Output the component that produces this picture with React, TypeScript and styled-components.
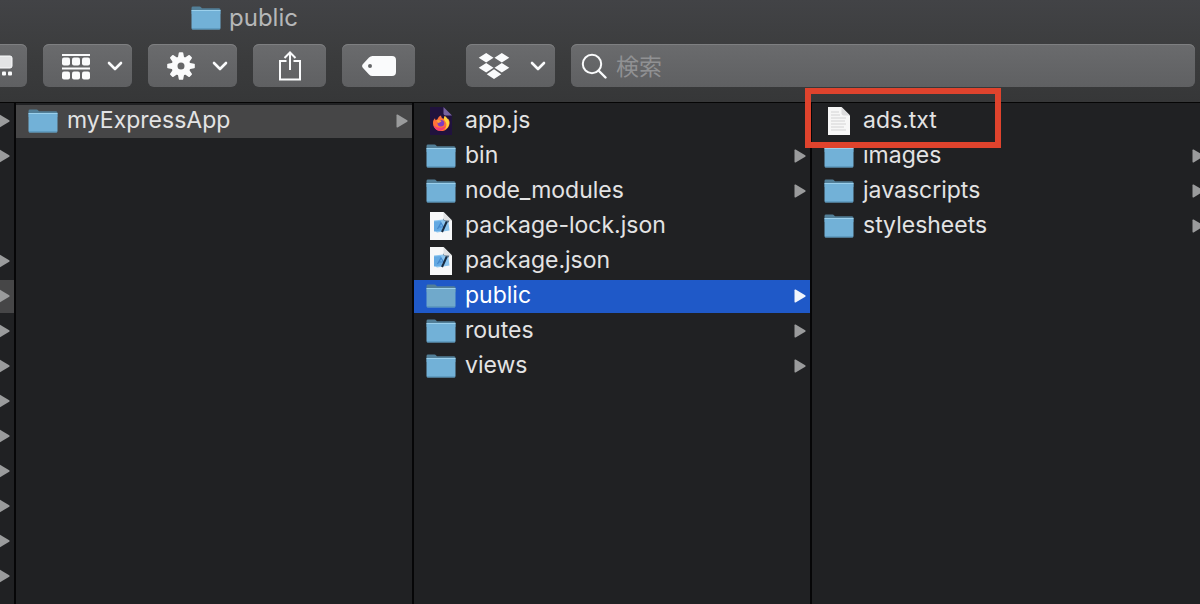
import React from "react";
import styled, { createGlobalStyle, css } from "styled-components";

const GlobalStyle = createGlobalStyle`
  * { box-sizing: border-box; }
  body {
    margin: 0;
    background: #202123;
    font-family: Inter, "Noto Sans CJK JP", sans-serif;
    -webkit-font-smoothing: antialiased;
  }
  svg { display: block; flex: none; }
`;

const Window = styled.div`
  display: flex;
  flex-direction: column;
  min-height: 100vh;
  overflow: hidden;
  background: #202123;
`;

const Header = styled.header`
  background: linear-gradient(#424346, #3b3c3d 55%, #363738);
  border-bottom: 1px solid #050505;
  padding-bottom: 15px;
`;

const TitleBar = styled.div`
  display: flex;
  align-items: center;
  gap: 8px;
  height: 36px;
  margin-bottom: 8px;
  padding-left: 191px;
`;

const Title = styled.h1`
  margin: 0;
  font-size: 24px;
  line-height: 36px;
  font-weight: 400;
  color: #b6b7b8;
`;

const Toolbar = styled.div`
  display: flex;
  gap: 16px;
  padding-right: 5px;
`;

const surface = css`
  height: 43px;
  border: 0;
  border-radius: 6px;
  background: linear-gradient(#6a6b6d, #5f6062);
  box-shadow: inset 0 1px 0 #7e7f81;
  color: #fafbfc;
`;

const ToolButton = styled.button`
  ${surface}
  display: flex;
  flex: none;
  align-items: center;
  justify-content: center;
  width: 73px;
  padding: 0;
`;

const MenuButton = styled(ToolButton)<{ $inset: number }>`
  justify-content: space-between;
  width: 89px;
  padding: 0 9px 0 ${(p) => p.$inset}px;
`;

const EdgeButton = styled(ToolButton)`
  justify-content: flex-start;
  width: 27px;
  border-radius: 0 6px 6px 0;
`;

const Spacer = styled.div`
  flex: none;
  width: 19px;
`;

const SearchBox = styled.label`
  ${surface}
  display: flex;
  flex: 1;
  align-items: center;
  gap: 9px;
  min-width: 0;
  padding-left: 10px;
`;

const SearchInput = styled.input`
  flex: 1;
  min-width: 0;
  padding: 0 0 2px;
  border: 0;
  outline: 0;
  background: transparent;
  color: #fff;
  font: 400 23px/32px "Noto Sans CJK JP", sans-serif;
  &::placeholder { color: #909193; opacity: 1; }
`;

const Columns = styled.main`
  display: flex;
  flex: 1;
  width: calc(100% + 10px);
`;

const Column = styled.ul<{ $edge?: boolean }>`
  display: flex;
  flex-direction: column;
  flex: ${(p) => (p.$edge ? "0 0 16px" : "1 1 0")};
  gap: 2px;
  min-width: 0;
  margin: 0;
  padding: 2px 0 0;
  list-style: none;
  border-right: 2px solid #060607;
`;

const Item = styled.li`
  position: relative;
  height: 33px;
`;

type Tone = "plain" | "path" | "active";

const Row = styled.button<{ $tone: Tone; $edge?: boolean }>`
  display: flex;
  align-items: center;
  justify-content: ${(p) => (p.$edge ? "flex-end" : "flex-start")};
  gap: 9px;
  width: 100%;
  height: 33px;
  padding: 0 4px 2px ${(p) => (p.$edge ? 0 : 12)}px;
  border: 0;
  overflow: hidden;
  text-align: left;
  font: 400 23px/31px Inter, sans-serif;
  color: ${(p) => (p.$tone === "active" ? "#fff" : "#e3e3e4")};
  background: ${(p) => ({ plain: "transparent", path: "#464647", active: "#1f59c8" })[p.$tone]};
`;

const RowName = styled.span`
  flex: 1;
  white-space: nowrap;
`;

const Highlight = styled.div`
  position: absolute;
  z-index: 1;
  top: -17px;
  left: -7px;
  width: 196px;
  height: 60px;
  border: 6px solid #df432d;
  pointer-events: none;
`;

const Folder = ({ dim }: { dim?: boolean }) => (
  <svg width="30" height="24" viewBox="0 0 30 24">
    <path d="M.5 6V2Q.5.6 2 .6h6.500q1 0 1.700.8l.8.8H28q1.500 0 1.500 1.500V8H.5z" fill="#527f98" />
    <path d="M.5 4.500h29V22q0 1.500-1.500 1.500H2Q.5 23.500.5 22z" fill={dim ? "#70a9cb" : "#72b1d7"} />
    <path d="M.5 4.500h29" stroke="#9bd0ec" />
    <path d="M1 22.800h28" stroke="#5793b8" />
  </svg>
);

const Sheet = ({ fill, fold, children }: { fill: string; fold: string; children: React.ReactNode }) => (
  <svg width="30" height="30" viewBox="0 0 30 30">
    <path d="M4 1h13.500L26 9.500V29H4z" fill={fill} />
    {children}
    <path d="M17.500 1 26 9.500h-6.500q-2 0-2-2z" fill={fold} />
  </svg>
);

const Firefox = () => (
  <Sheet fill="#20123d" fold="#76639f">
    <path d="M7 17c0-2 .7-3.400 2-4.700l.5 1.900 2-.9c.6-2 2-3 3.600-3.700 0 2 1 2.500 2.300 3.500l1.400-3.200c1.600 1.200 2 2.700 2.200 4 .8-.3 1-.8 1.200-1.200C24 15 24 17 23.200 19.200 22 22.700 19 25 15.300 25 10.500 25 7 21.500 7 17z" fill="#ff7139" />
    <path d="M18.800 9.900c2.900 2 4.800 5 4.300 7.900-.4 2.800-2 4.700-4.200 5.600 1.800-2.200 2.200-5.800.2-8.200-1.500-1.700-1.500-3.500-.3-5.300z" fill="#ffd33d" />
    <path d="M7.400 19.300c3 3 8.600 3.500 12.600.5-1.600 3.400-4 5.100-6.700 5-3-.4-5-2.500-5.900-5.500z" fill="#f43b75" />
    <circle cx="14.900" cy="17.200" r="3.300" fill="#803bc1" />
    <path d="M10.500 14.500c2-.9 3.700-.5 5 .8-1.200 1.400-2.500 1-3.500 2z" fill="#ff9e38" />
  </Sheet>
);

const Xcode = () => (
  <Sheet fill="#f7f8f9" fold="#dfe1e3">
    <path d="m8 9.500 14-1.500 1.500 11.500L11 21.500l-3-2z" fill="#8cc5ee" />
    <path d="m8 10.500 7-.5 1 9.500-8 1z" fill="#63a9e2" />
    <path d="m11.500 18 3.500-6 3.500 5.500M12.500 16h5.500" fill="none" stroke="#4488cc" strokeWidth="1.200" />
    <path d="m21 10-5 11" stroke="#172a40" strokeWidth="2" />
    <path d="m17.500 8 5.500 2.500" stroke="#546c83" strokeWidth="2.200" />
  </Sheet>
);

const TextDoc = () => (
  <Sheet fill="#f7f7f7" fold="#dcdcdd">
    <path d="M7 6h8M7 9h9M7 12h15M7 15h14M7 18h15M7 21h13M7 24h15" stroke="#d3d3d4" />
  </Sheet>
);

const Arrow = ({ bright }: { bright?: boolean }) => (
  <svg width="12" height="14" viewBox="0 0 12 14">
    <path d="M.5 1.200Q.5 0 1.600.6l9.600 5.600q1 .8 0 1.500l-9.600 5.700Q.5 14 .5 12.800z" fill={bright ? "#f1f5fc" : "#9a9b9c"} />
  </svg>
);

const Chevron = () => (
  <svg width="16" height="12" viewBox="0 0 16 12">
    <path d="m2 3 6 6 6-6" fill="none" stroke="currentColor" strokeWidth="2.600" strokeLinecap="round" strokeLinejoin="round" />
  </svg>
);

const GalleryIcon = () => (
  <svg width="13" height="22" viewBox="0 0 13 22" fill="currentColor">
    <path d="M0 1h10q2 0 2 2v8q0 2-2 2H0z" fill="#e3e4e5" />
    <path d="M0 1h10q2 0 2 2v8q0 2-2 2H0" fill="none" stroke="currentColor" />
    <rect x="2" y="16.500" width="4" height="4" rx="1" />
    <rect x="8" y="16.500" width="4" height="4" rx="1" />
  </svg>
);

const GroupIcon = () => (
  <svg width="28" height="28" viewBox="0 0 28 28" fill="currentColor">
    <path d="M0 2h28v2H0zM0 15.500h28v2H0z" />
    {[5.5, 19.500].map((y) => [0, 10, 20].map((x) => <rect key={`${x}-${y}`} x={x} y={y} width="8" height="8" rx="2" />))}
  </svg>
);

const GearIcon = () => (
  <svg width="28" height="28" viewBox="-14 -14 28 28" fill="currentColor">
    {[0, 45, 90, 135, 180, 225, 270, 315].map((a) => (
      <path key={a} d="M-3.200-8-2.200-13.200q.2-.6.800-.6h2.800q.6 0 .8.600L3.200-8z" transform={`rotate(${a})`} />
    ))}
    <circle r="6.500" fill="none" stroke="currentColor" strokeWidth="6" />
  </svg>
);

const ShareIcon = () => (
  <svg width="24" height="32" viewBox="0 0 24 32" fill="none" stroke="currentColor" strokeWidth="2">
    <path d="M8.500 11H2v18.500h20V11h-6.500M12 20V2.500M6.500 8 12 2.500 17.500 8" />
  </svg>
);

const TagIcon = () => (
  <svg width="34" height="20" viewBox="0 0 34 20">
    <path d="M10.500 0H30q4 0 4 4v12q0 4-4 4H10.500Q8.500 20 7 18.500L1 12q-1.800-2 0-4l6-6.500Q8.500 0 10.500 0zM8 8a2 2 0 1 0 0 4 2 2 0 0 0 0-4z" fill="currentColor" fillRule="evenodd" />
  </svg>
);

const DropboxIcon = () => (
  <svg width="32" height="28" viewBox="0 0 32 28" fill="currentColor">
    <path d="m8.200 1 7.300 4.700-7.300 4.700L.7 5.700zM23.800 1l7.500 4.700-7.500 4.700-7.300-4.700zM8.200 11l7.300 4.700-7.300 4.700-7.500-4.700zM23.800 11l7.500 4.700-7.500 4.700-7.300-4.700zM16 17.300l7.300 4.900L16 27l-7.300-4.800z" />
  </svg>
);

const SearchIcon = () => (
  <svg width="26" height="26" viewBox="0 0 26 26" fill="none" stroke="currentColor" strokeWidth="2">
    <circle cx="11" cy="11" r="9.200" />
    <path d="m17.500 17.500 7 7" strokeWidth="2.400" strokeLinecap="round" />
  </svg>
);

const icons = { folder: Folder, firefox: Firefox, xcode: Xcode, text: TextDoc };

interface Entry {
  name: string;
  icon?: keyof typeof icons;
  tone?: Tone;
  marked?: boolean;
}

const columns: Entry[][] = [
  [{ name: "myExpressApp", tone: "path" }],
  [
    { name: "app.js", icon: "firefox" },
    { name: "bin" },
    { name: "node_modules" },
    { name: "package-lock.json", icon: "xcode" },
    { name: "package.json", icon: "xcode" },
    { name: "public", tone: "active" },
    { name: "routes" },
    { name: "views" },
  ],
  [{ name: "ads.txt", icon: "text", marked: true }, { name: "images" }, { name: "javascripts" }, { name: "stylesheets" }],
];

const parentRows = Array.from({ length: 14 }, (_, i) => ({ folder: i !== 2 && i !== 3, open: i === 5 }));

const EntryRow = ({ name, icon = "folder", tone = "plain", marked }: Entry) => {
  const Icon = icons[icon];
  return (
    <Item>
      <Row $tone={tone}>
        <Icon dim={tone === "active"} />
        <RowName>{name}</RowName>
        {icon === "folder" && <Arrow bright={tone === "active"} />}
      </Row>
      {marked && <Highlight />}
    </Item>
  );
};

export default function App() {
  return (
    <Window>
      <GlobalStyle />
      <Header>
        <TitleBar>
          <Folder />
          <Title>public</Title>
        </TitleBar>
        <Toolbar>
          <EdgeButton aria-label="Gallery view"><GalleryIcon /></EdgeButton>
          <MenuButton $inset={19} aria-label="Group items"><GroupIcon /><Chevron /></MenuButton>
          <MenuButton $inset={19} aria-label="Actions"><GearIcon /><Chevron /></MenuButton>
          <ToolButton aria-label="Share"><ShareIcon /></ToolButton>
          <ToolButton aria-label="Edit tags"><TagIcon /></ToolButton>
          <Spacer />
          <MenuButton $inset={12} aria-label="Dropbox"><DropboxIcon /><Chevron /></MenuButton>
          <SearchBox>
            <SearchIcon />
            <SearchInput type="text" placeholder="検索" aria-label="検索" />
          </SearchBox>
        </Toolbar>
      </Header>
      <Columns>
        <Column $edge>
          {parentRows.map((row, i) => (
            <Item key={i}>
              {row.folder && (
                <Row $edge $tone={row.open ? "path" : "plain"} aria-label="Folder">
                  <Arrow />
                </Row>
              )}
            </Item>
          ))}
        </Column>
        {columns.map((entries, i) => (
          <Column key={i}>
            {entries.map((entry) => <EntryRow key={entry.name} {...entry} />)}
          </Column>
        ))}
      </Columns>
    </Window>
  );
}
